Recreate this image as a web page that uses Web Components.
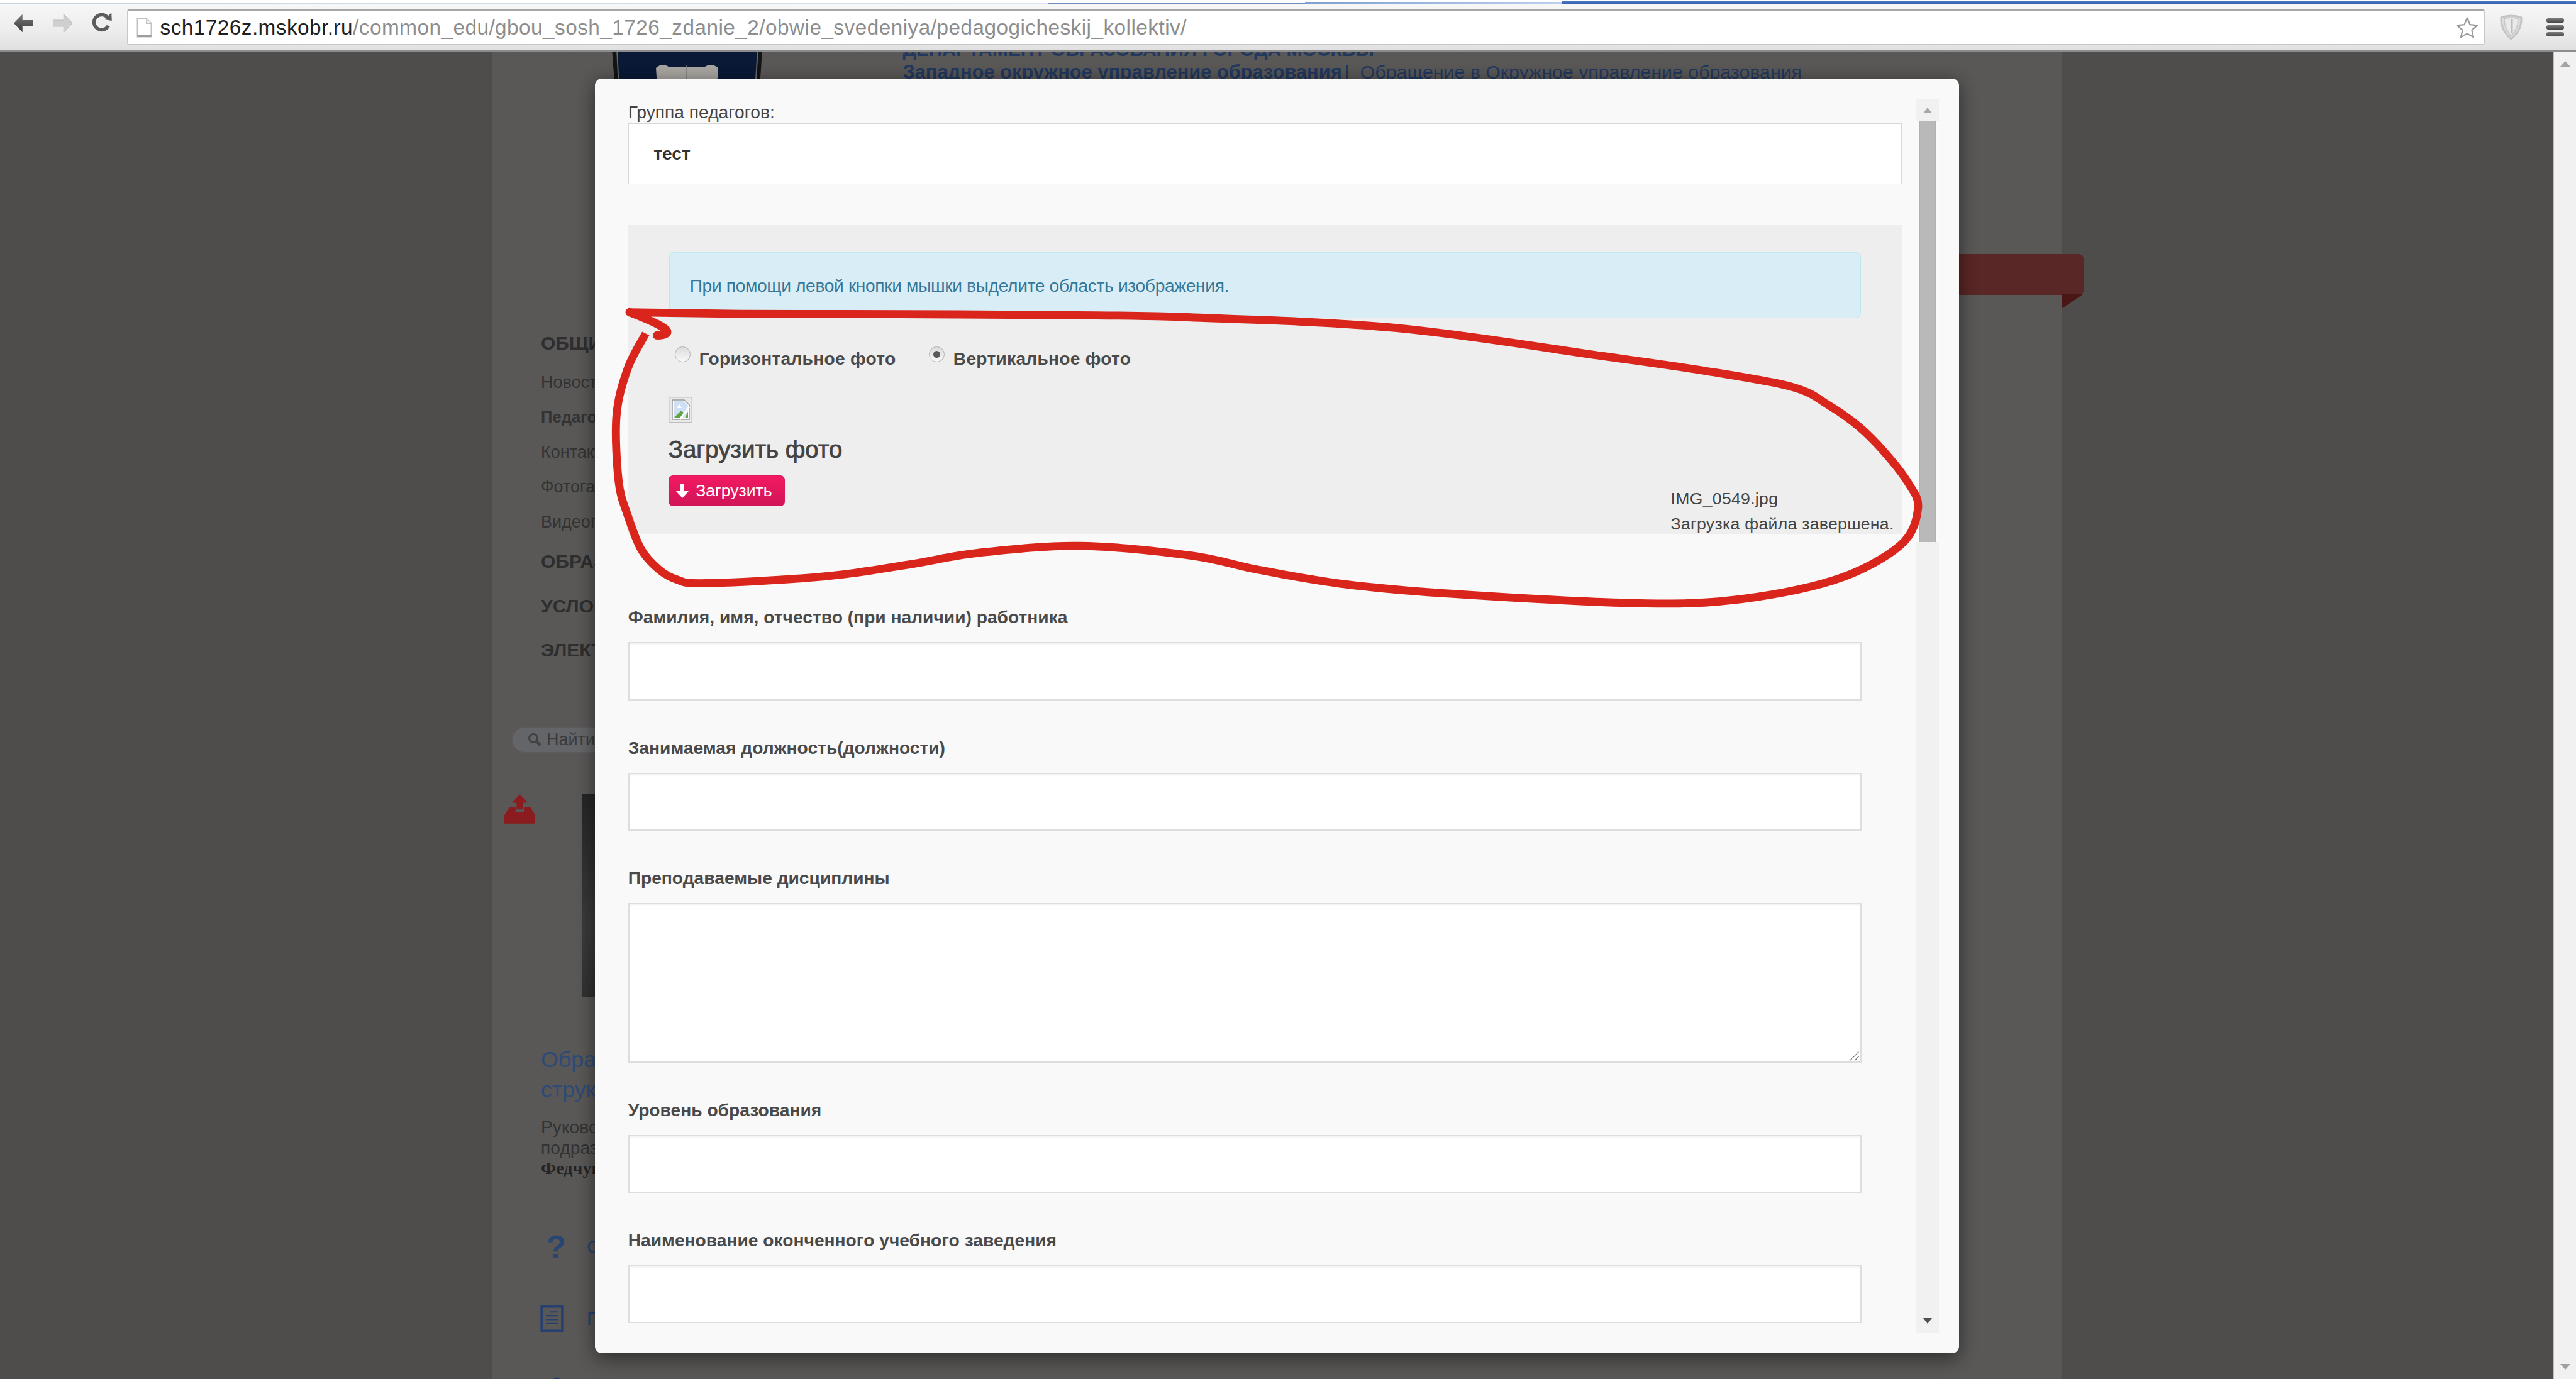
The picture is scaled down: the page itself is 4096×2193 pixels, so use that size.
<!DOCTYPE html>
<html lang="ru">
<head>
<meta charset="utf-8">
<title>Группа педагогов</title>
<style>
html,body{margin:0;padding:0;width:4096px;height:2193px;overflow:hidden;background:#4e4d4b;font-family:"Liberation Sans",Arial,sans-serif}
</style>
</head>
<body>
<app-window></app-window>
<script>
function def(name, html, setup){
  customElements.define(name, class extends HTMLElement{
    constructor(){super();const r=this.attachShadow({mode:'open'});r.innerHTML=html;if(setup)setup(r,this);}
  });
}

def('browser-chrome',`<style>
:host{display:block;height:82px;position:relative;font-family:"Liberation Sans",Arial,sans-serif}
.strip{height:6px;display:flex;align-items:flex-end;background:#fff}
.strip i{display:block}
.bar{height:76px;box-sizing:border-box;display:flex;align-items:flex-start;padding:9px 19px 0 21.5px;background:linear-gradient(#f7f7f7,#ececec 60%,#e0e0e0);border-bottom:2px solid #8c8c8c}
.nav{width:31px;height:32px;margin-right:31.5px;margin-top:6px;flex:none}
.nav:nth-child(3){margin-right:24.5px;margin-top:4px}
.addr{flex:1;height:56px;box-sizing:border-box;background:#fff;border:1px solid #c8c8c8;border-top:2px solid #a6a6a6;border-radius:3px;display:flex;align-items:center;padding:0 9px 0 14px;position:relative}
.addr .doc{flex:none;margin-right:12.5px}
.url{flex:1;font-size:33.3px;line-height:50px;white-space:nowrap;color:#8d8d8d;letter-spacing:.48px}
.url b{font-weight:400;color:#202020}
.ext{flex:none;margin-left:24px;margin-top:8px}
.menu{flex:none;margin-left:38px;margin-top:14px;width:28px;display:flex;flex-direction:column;gap:4.5px}
.menu i{display:block;height:6.5px;border-radius:3px;background:linear-gradient(#7d7d7d,#474747)}
</style>
<div class="strip">
<i style="width:1667px;height:2px;background:linear-gradient(90deg,#c7d2e4,#dbe3ef)"></i>
<i style="width:408px;height:2.5px;background:#6d8cbe"></i>
<i style="width:409px;height:3px;background:linear-gradient(90deg,#7f9fd0,#bcd0ee)"></i>
<i style="flex:1;height:5px;background:linear-gradient(#4d79c8,#3a62ad)"></i>
</div>
<div class="bar">
<svg class="nav" viewBox="0 0 61 62"><defs><linearGradient id="g1" x1="0" x2="0" y1="0" y2="1"><stop offset="0" stop-color="#7a7a7a"/><stop offset="1" stop-color="#3a3a3a"/></linearGradient></defs><path d="M0 31 27 3V21H61V41H27V59Z" fill="url(#g1)"/></svg>
<svg class="nav" viewBox="0 0 61 62"><path d="M61 31 34 3V21H0V41H34V59Z" fill="#cfcfcf" stroke="#bdbdbd" stroke-width="2"/></svg>
<svg class="nav" viewBox="0 0 61 64"><path d="M49 20A24 24 0 1 0 50 44" fill="none" stroke="#5c5c5c" stroke-width="11"/><path d="M38 24 61 28 60 2Z" fill="#5c5c5c"/></svg>
<div class="addr">
<svg class="doc" width="25" height="32" viewBox="0 0 25 32"><path d="M1.5 1.5H16L23.5 9V30.5H1.5Z" fill="#fff" stroke="#c2c2c2" stroke-width="2"/><path d="M16 1.5V9H23.5" fill="#eee" stroke="#c2c2c2" stroke-width="2"/><path d="M1.5 29.5H23.5" stroke="#9d9d9d" stroke-width="3"/></svg>
<div class="url"><b>sch1726z.mskobr.ru</b>/common_edu/gbou_sosh_1726_zdanie_2/obwie_svedeniya/pedagogicheskij_kollektiv/</div>
<svg width="36" height="36" viewBox="0 0 36 36"><path d="M18 2.5 22.6 13.2 34 14.4 25.4 21.9 28 33.3 18 27.4 8 33.3 10.6 21.9 2 14.4 13.4 13.2Z" fill="#fff" stroke="#9a9a9a" stroke-width="2.2" stroke-linejoin="round"/></svg>
</div>
<svg class="ext" width="36" height="40" viewBox="0 0 36 40"><path d="M2 5Q18-1 34 5 35 25 18 39 1 25 2 5Z" fill="#dcdcdc" stroke="#c4c4c4" stroke-width="3"/><path d="M7 7Q18 3 29 7 29 23 18 34 7 23 7 7Z" fill="#e9e9e9" stroke="#c6c6c6" stroke-width="1.5"/><path d="M19 8V29" stroke="#bdbdbd" stroke-width="3"/></svg>
<div class="menu"><i></i><i></i><i></i></div>
</div>`);

def('page-scrollbar',`<style>
:host{display:flex;flex-direction:column;align-items:center;justify-content:space-between;width:36px;flex:none;box-sizing:border-box;background:#f1f1f1;border-left:1px solid #bdbdbd;padding:15px 0 15px}
i{display:block;width:0;height:0;border-left:8px solid transparent;border-right:8px solid transparent}
.u{border-bottom:9px solid #a4a4a4}.d{border-top:9px solid #a0a0a0}
</style><i class="u"></i><i class="d"></i>`);

def('site-backdrop',`<style>
:host{display:block;width:2496px;flex:none;height:2111px;background:#595857;font-family:"Liberation Sans",Arial,sans-serif;color:#2e2e2e}
.head{height:320px;display:flex;align-items:flex-start}
.logo{flex:none;margin-left:189.4px;margin-top:-40px}
.htext{margin-left:221px;margin-top:-20.7px;line-height:35.3px;color:#22385f;white-space:nowrap}
.htext b.a{display:block;font-size:30px}
.htext b.b{font-size:30.8px}
.htext span{font-size:30.3px;font-weight:400}
.body{display:flex}
.side{width:420px;flex:none;padding-left:35px;white-space:nowrap}
.main{flex:1;display:flex;flex-direction:column;align-items:flex-end}
.sec{display:block;height:64px;margin-top:111.8px;box-sizing:border-box;padding-left:43px;line-height:64px;font-weight:700;font-size:30px;border-bottom:1px solid #6a6a69}
.sec.t{height:70px;margin-top:0;padding-top:6px}
.sec.m{height:64.6px;margin-top:3px}
.it{display:block;height:55.5px;line-height:55.5px;padding-left:43px;font-size:27px;color:#333}
.it b{font-size:25.6px}
.list{padding-top:3px}
.find{height:41px;margin-top:90px;margin-left:-3px;width:300px;background:#646568;border:1px solid #5c5c60;box-sizing:border-box;border-radius:21px;display:flex;align-items:center;color:#3c3c3c;font-size:27px;padding-left:24px}
.find svg{margin-right:8px}
.fea{display:flex;margin-top:66.5px;margin-left:-15px;align-items:flex-start;height:323px}
.fea svg{flex:none}
.photo{width:200px;height:323px;flex:none;margin-left:74px;background:linear-gradient(160deg,#262626,#3b3b3b 55%,#2a2a2a)}
.link{margin-top:75px;margin-left:43px;font-size:35.8px;line-height:48px;color:#2d4a78}
.who{margin-top:19px;margin-left:43px;font-size:28.2px;line-height:32.2px;color:#333}
.who b{font-family:"Liberation Serif",serif;color:#252525}
.tool{display:flex;align-items:center;height:114px;margin-left:42px;color:#26416f;white-space:nowrap}
.tool .ic{width:74px;flex:none;display:flex;justify-content:flex-start}
.q{font-size:51px;font-weight:700;line-height:1;margin-left:10px;color:#294672}
.lbl{font-size:30px}
.ribbon{margin-top:2px;margin-right:-36.4px;width:1000px;height:64.5px;background:#592725;border-radius:0 9px 9px 0;position:relative}
.fold{position:absolute;right:2px;top:63.5px;width:0;height:0;border-top:23px solid #4b1616;border-right:34px solid transparent}
</style>
<div class="head">
<svg class="logo" width="243" height="150" viewBox="0 0 243 150">
<path d="M4 30 L2 36 Q6 90 12 150 H232 Q238 90 241 36 L239 30Z" fill="#141414"/>
<path d="M9 34 Q11 90 17 150 H227 Q232 90 235 34Z" fill="#6b6b6b"/>
<path d="M11 36 Q13 90 19 150 H225 Q230 90 233 36Z" fill="#0a1a36"/>
<path d="M72 66 Q82 57 92 64 L120 64 L150 64 Q160 57 171 66 L169 95 H74Z" fill="#a9a6a2"/>
<path d="M120 62V95" stroke="#7e7d7c" stroke-width="1.5"/>
</svg>
<div class="htext"><b class="a">ДЕПАРТАМЕНТ ОБРАЗОВАНИЯ ГОРОДА МОСКВЫ</b><b class="b">Западное окружное управление образования</b> <span>|&nbsp; Обращение в Окружное управление образования</span></div>
</div>
<div class="body">
<div class="side">
<div class="sec">ОБЩИЕ СВЕДЕНИЯ</div>
<div class="list">
<div class="it">Новости</div>
<div class="it"><b>Педагогический коллектив</b></div>
<div class="it">Контакты</div>
<div class="it">Фотогалерея</div>
<div class="it">Видеогалерея</div>
</div>
<div class="sec m">ОБРАЗОВАНИЕ</div>
<div class="sec t">УСЛОВИЯ</div>
<div class="sec t">ЭЛЕКТРОННЫЕ УСЛУГИ</div>
<div class="find"><svg width="22" height="22" viewBox="0 0 22 22"><circle cx="9" cy="9" r="6.5" fill="none" stroke="#414141" stroke-width="3"/><path d="M14 14 20 20" stroke="#414141" stroke-width="4"/></svg>Найти</div>
<div class="fea">
<svg width="49" height="47" viewBox="0 0 96 91"><path d="M15 40H35V55H61V40H81L96 65V91H0V65Z" fill="#8a1b1e"/><path d="M48 0 72 26H58V47H38V26H24Z" fill="#8a1b1e"/><path d="M8 77H88" stroke="#b25a5a" stroke-width="2"/></svg>
<div class="photo"></div>
</div>
<div class="link">Образовательная<br>структура</div>
<div class="who">Руководитель<br>подразделения<br><b>Федчук</b></div>
<div class="tool" style="margin-top:52px"><div class="ic"><span class="q">?</span></div><span class="lbl">С</span></div>
<div class="tool"><div class="ic"><svg width="37" height="42" viewBox="0 0 71 82"><rect x="3.5" y="3.5" width="64" height="75" fill="none" stroke="#26416f" stroke-width="7"/><path d="M30 20H54M17 32H54M17 44H54M17 56H54" stroke="#26416f" stroke-width="3.5"/></svg></div><span class="lbl">П</span></div>
<div class="tool"><div class="ic"><svg width="32" height="42" viewBox="0 0 32 42" style="margin-left:10px"><path d="M8 8 11 2 16 0 21 2 24 8Z" fill="#26416f"/></svg></div></div>
</div>
<div class="main"><div class="ribbon"><div class="fold"></div></div></div>
</div>`);

const fieldCss=`:host{display:block}
.l{height:114.7px;box-sizing:border-box;display:flex;align-items:flex-end;padding-bottom:23px;font-size:28.2px;line-height:34px;font-weight:700;color:#4a4a4a;white-space:nowrap}
.w{position:relative;width:1961.5px}
.c{display:block;width:100%;box-sizing:border-box;background:#fff;border:2.5px solid #dedede;box-shadow:inset 0 2px 3px rgba(0,0,0,.05);margin:0;padding:0;outline:0}
input.c{height:92.6px}
textarea.c{height:254px;resize:none}
.grip{position:absolute;right:3px;bottom:3px}`;
def('form-field',`<style>${fieldCss}</style><div class="l"><slot></slot></div><div class="w"><input class="c" type="text"></div>`);
def('form-area',`<style>${fieldCss}</style><div class="l"><slot></slot></div><div class="w"><textarea class="c"></textarea><svg class="grip" width="16" height="16" viewBox="0 0 16 16"><path d="M1 15 15 1M8.5 15 15 8.5" stroke="#6e6e6e" stroke-width="1.3" stroke-dasharray="4 1"/></svg></div>`);

def('radio-opt',`<style>
:host{display:flex;align-items:center;flex:none;font-size:28.2px;font-weight:700;color:#4a4a4a;white-space:nowrap;letter-spacing:.25px}
.r{width:25px;height:25px;box-sizing:border-box;border-radius:50%;border:1.5px solid #b0b0b0;background:linear-gradient(#dcdcdc,#f8f8f8);margin:-14px 13.3px 0 0;display:flex;align-items:center;justify-content:center;flex:none}
.r.on::after{content:"";width:11px;height:11px;border-radius:50%;background:#5a5a5a}
</style><span class="r"></span><slot></slot>`, (r,h)=>{ if(h.hasAttribute('checked')) r.querySelector('.r').classList.add('on'); });

def('upload-button',`<style>
:host{display:flex;align-items:center;width:185px;height:49px;box-sizing:border-box;border-radius:7px;background:linear-gradient(#f21a62,#d11458);border:1px solid #e0175c;color:#fff;font-size:26.6px;padding-left:11px}
svg{margin-right:11.5px;flex:none}
</style><svg width="20" height="22" viewBox="0 0 20 22"><path d="M7 0H13V11H20L10 22 0 11H7Z" fill="#fff"/></svg><slot></slot>`);

def('photo-panel',`<style>
:host{display:block;height:490.5px;background:#eee;box-sizing:border-box;padding-top:42.5px;color:#444;font-family:"Liberation Sans",Arial,sans-serif}
.alert{margin:0 65.5px 0 65px;height:105.5px;box-sizing:border-box;background:#d9edf6;border:1.5px solid #bce8f1;border-radius:8px;color:#35789a;font-size:28.2px;letter-spacing:-.36px;display:flex;align-items:center;padding-left:32px;padding-top:2px}
.radios{margin-top:38.9px;height:50px;display:flex;align-items:center;padding-left:74.8px}
.radios radio-opt:first-child{width:404px}
.lower{display:flex;padding-left:64px;margin-top:35.9px}
.left{flex:1}
.bi{display:block}
h3{margin:0;font-size:38.4px;line-height:82px;padding-top:1.5px;font-weight:400;-webkit-text-stroke:.9px #444;color:#444;height:83.5px;box-sizing:border-box;white-space:nowrap}
.files{flex:0 0 367.6px;align-self:flex-end;font-size:26.6px;letter-spacing:.3px;line-height:39.4px;color:#444;margin-bottom:-48px;white-space:nowrap}
</style>
<div class="alert">При помощи левой кнопки мышки выделите область изображения.</div>
<div class="radios"><radio-opt>Горизонтальное фото</radio-opt><radio-opt checked>Вертикальное фото</radio-opt></div>
<div class="lower">
<div class="left">
<svg class="bi" width="38" height="41.5" viewBox="0 0 38 41.5"><rect x=".75" y=".75" width="36.5" height="40" fill="#e9e9e9" stroke="#bdbdbd" stroke-width="1.5"/><path d="M6 5H25L33 13V36H6Z" fill="#fff" stroke="#9a9a9a" stroke-width="1.5"/><path d="M8 7H24L31 14V34H8Z" fill="#cfe0f6"/><path d="M13 18 17 12 21 18Z" fill="#fff"/><path d="M8 34 20 22 26 27 18 34Z" fill="#5ca83a"/><path d="M26 34 31 24V34Z" fill="#5ca83a"/><path d="M33 16 18 36" stroke="#fff" stroke-width="3"/></svg>
<h3>Загрузить фото</h3>
<upload-button>Загрузить</upload-button>
</div>
<div class="files">IMG_0549.jpg<br>Загрузка файла завершена.</div>
</div>`);

def('modal-scrollbar',`<style>
:host{display:flex;flex-direction:column;align-items:center;width:36px;flex:none;background:#f1f1f1;height:1963px;position:relative}
.u{margin-top:14px;width:0;height:0;border-left:7.5px solid transparent;border-right:7.5px solid transparent;border-bottom:9px solid #a6a6a6}
.t{margin-top:13.3px;width:36px;height:669px;box-sizing:border-box;border-left:4.5px solid #fafafa;border-right:4px solid #fafafa;background:#b9b9b9;box-shadow:inset 1.5px 0 0 #a9a9a9,inset -1.5px 0 0 #a9a9a9}
.d{margin-top:auto;margin-bottom:15px;width:0;height:0;border-left:7.5px solid transparent;border-right:7.5px solid transparent;border-top:9px solid #505050}
</style><div class="u"></div><div class="t"></div><div class="d"></div>`);

def('modal-dialog',`<style>
:host{display:flex;position:absolute;left:946px;top:43px;width:2169px;height:2026.5px;box-sizing:border-box;padding:31.7px;background:#f9f9f9;border-radius:11px;box-shadow:0 12px 30px rgba(0,0,0,.32),0 0 24px rgba(0,0,0,.22);font-family:"Liberation Sans",Arial,sans-serif;color:#444}
.content{flex:1;padding-left:21px;min-width:0}
.gl{height:39.4px;box-sizing:border-box;display:flex;align-items:flex-end;padding-bottom:2.5px;font-size:28.2px;line-height:32px;white-space:nowrap}
.group{width:2025.5px;height:96.8px;box-sizing:border-box;background:#fff;border:1.5px solid #d8d8d8;display:flex;align-items:center;padding-left:39.5px;font-weight:700;font-size:28.2px;color:#333}
photo-panel{width:2025.5px;margin-top:65.5px}
.fields{margin-top:57.8px}
</style>
<div class="content">
<div class="gl">Группа педагогов:</div>
<div class="group">тест</div>
<photo-panel></photo-panel>
<div class="fields"><slot></slot></div>
</div>
<modal-scrollbar></modal-scrollbar>`);

def('red-scribble',`<style>
:host{display:block;position:absolute;left:0;top:0;width:4096px;height:2193px;pointer-events:none}
svg{display:block}
</style><svg width="4096" height="2193" viewBox="0 0 8000 4284"><path id="a" fill="none" stroke="#d9251c" stroke-width="25" stroke-linecap="butt"/><path id="b" fill="none" stroke="#d9251c" stroke-width="26" stroke-linecap="round" stroke-linejoin="round" d="M1955 970C1995 985 2050 1008 2068 1024 2078 1034 2066 1042 2040 1042"/></svg>`, r=>{
  const p=[[1950,970],[2300,975],[2800,976],[3300,979],[3700,986],[4338,1019],[4976,1106],[5295,1152],[5566,1202],[5678,1258],[5773,1325],[5853,1405],[5925,1498],[5957,1579],[5901,1695],[5694,1803],[5375,1865],[5056,1873],[4497,1844],[4178,1815],[3907,1770],[3700,1726],[3352,1696],[3043,1717],[2833,1752],[2622,1784],[2426,1801],[2173,1812],[2103,1801],[2047,1770],[1991,1707],[1949,1601],[1921,1496],[1914,1293],[1949,1145],[2005,1036]];
  let d='M'+p[0].join(' ');
  for(let i=0;i<p.length-1;i++){
    const a=p[Math.max(0,i-1)],b=p[i],c=p[i+1],e=p[Math.min(p.length-1,i+2)];
    const c1=[b[0]+(c[0]-a[0])/6,b[1]+(c[1]-a[1])/6],c2=[c[0]-(e[0]-b[0])/6,c[1]-(e[1]-b[1])/6];
    d+='C'+c1.map(v=>v.toFixed(1)).join(' ')+' '+c2.map(v=>v.toFixed(1)).join(' ')+' '+c.join(' ');
  }
  r.getElementById('a').setAttribute('d',d);
});

def('page-view',`<style>
:host{display:flex;height:2111px;position:relative;overflow:hidden;background:#4e4d4b}
.vp{flex:1;display:flex;justify-content:center;min-width:0;overflow:hidden;position:relative}
</style><div class="vp"><site-backdrop></site-backdrop><slot></slot></div><page-scrollbar></page-scrollbar>`);

def('app-window',`<style>
:host{display:block;width:4096px;height:2193px;position:relative;overflow:hidden}
</style>
<browser-chrome></browser-chrome>
<page-view>
<modal-dialog>
<form-field>Фамилия, имя, отчество (при наличии) работника</form-field>
<form-field>Занимаемая должность(должности)</form-field>
<form-area>Преподаваемые дисциплины</form-area>
<form-field>Уровень образования</form-field>
<form-field>Наименование оконченного учебного заведения</form-field>
</modal-dialog>
</page-view>
<red-scribble></red-scribble>`);
</script>
</body>
</html>
